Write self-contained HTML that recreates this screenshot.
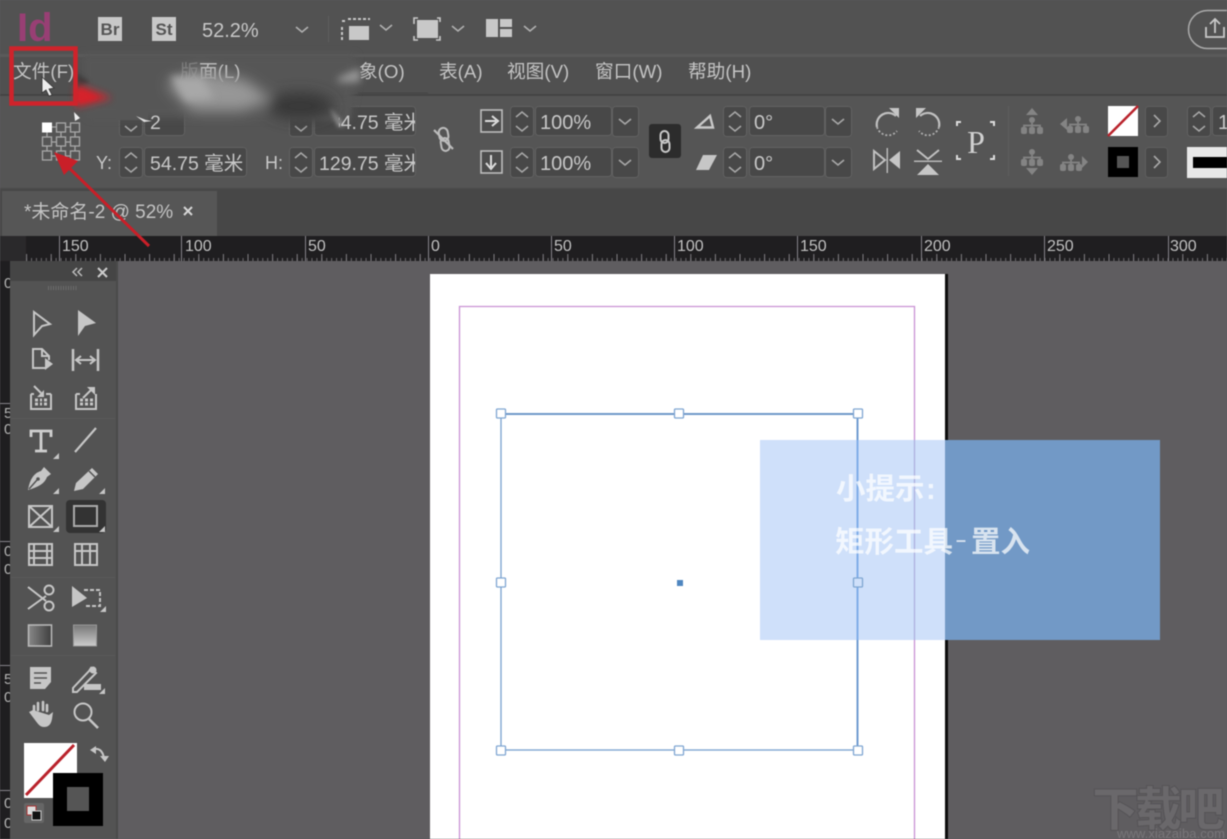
<!DOCTYPE html>
<html lang="zh"><head><meta charset="utf-8"><title>InDesign</title>
<style>
html,body{margin:0;padding:0;background:#5f5d60;width:1227px;height:839px;overflow:hidden}
svg{display:block;filter:blur(.5px)}
text{font-family:"Liberation Sans","Noto Sans CJK SC",sans-serif}
.m{font-size:18.7px;fill:#c4c4c4}
.f{font-size:20px;fill:#c8c8c8}
.c{font-size:19.5px;fill:#c8c8c8}
.r{font-size:16px;fill:#c2c2c2}
.i{fill:none;stroke:#c6c6c6;stroke-width:2}
.s{fill:#c6c6c6}
.d{fill:#8b8b8b}
.v{font-size:15px;fill:#b5b5b5}
</style></head><body>
<svg width="1227" height="839" viewBox="0 0 1227 839" xmlns="http://www.w3.org/2000/svg">
<defs>
<filter id="b8" x="-50%" y="-80%" width="200%" height="260%"><feGaussianBlur stdDeviation="7"/></filter>
<filter id="b4" x="-50%" y="-80%" width="200%" height="260%"><feGaussianBlur stdDeviation="4"/></filter>
<filter id="b2" x="-50%" y="-80%" width="200%" height="260%"><feGaussianBlur stdDeviation="2"/></filter>
<clipPath id="c1"><rect x="339" y="100" width="76" height="40"/></clipPath>
<clipPath id="c2"><rect x="300" y="145" width="115" height="35"/></clipPath>
<symbol id="sp" width="24" height="31" viewBox="0 0 24 31"><rect x=".5" y=".5" width="23" height="30" rx="3" fill="#484848" stroke="#616161"/><path d="M6 11l6-5 6 5M6 20l6 5 6-5" fill="none" stroke="#a8a8a8" stroke-width="1.5"/></symbol>
<symbol id="dd" width="27" height="31" viewBox="0 0 27 31"><rect x=".5" y=".5" width="26" height="30" rx="3" fill="#484848" stroke="#616161"/><path d="M7 13l6 5 6-5" fill="none" stroke="#a8a8a8" stroke-width="1.6"/></symbol>
<symbol id="ar" width="23" height="31" viewBox="0 0 23 31"><rect x=".5" y=".5" width="22" height="30" rx="3" fill="#484848" stroke="#5e5e5e"/><path d="M9 9l6 6-6 6" fill="none" stroke="#a8a8a8" stroke-width="1.6"/></symbol>
<symbol id="tr" width="22" height="17" viewBox="0 0 22 17"><circle cx="11" cy="3" r="3" fill="#848484"/><path d="M11 6v5M3 11V8.500h16V11" fill="none" stroke="#848484" stroke-width="1.800"/><rect x="0" y="10" width="6" height="7" rx="2" fill="#848484"/><rect x="8" y="10" width="6" height="7" rx="2" fill="#848484"/><rect x="16" y="10" width="6" height="7" rx="2" fill="#848484"/></symbol>
<pattern id="t1" width="4.92" height="25" patternUnits="userSpaceOnUse" x="1.500" y="236"><rect x="0" y="22" width="1" height="3" fill="#6c6a6e"/></pattern>
<pattern id="t2" width="24.6" height="25" patternUnits="userSpaceOnUse" x="1.500" y="236"><rect x="0" y="18" width="1" height="7" fill="#807e82"/></pattern>
<linearGradient id="g1" x1="0" x2="1"><stop offset="0" stop-color="#888"/><stop offset="1" stop-color="#3e3e3e"/></linearGradient>
<linearGradient id="g2" x1="0" x2="0" y1="0" y2="1"><stop offset="0" stop-color="#777"/><stop offset="1" stop-color="#ccc"/></linearGradient>
</defs>

<!-- backgrounds -->
<rect width="1227" height="839" fill="#5f5d60"/>
<rect width="1227" height="54" fill="#525252"/>
<rect y="54" width="1227" height="3" fill="#5a5a5a"/>
<rect y="57" width="1227" height="37" fill="#505050"/>
<rect y="94" width="1227" height="2" fill="#444"/>
<rect y="96" width="1227" height="93" fill="#555"/>
<rect y="189" width="1227" height="47" fill="#474747"/>
<rect x="2" y="191" width="215" height="45" fill="#565656"/>
<rect y="188" width="1227" height="1.500" fill="#4a4a4a"/>

<!-- top bar -->
<text x="17" y="41" font-size="40" font-weight="700" fill="#983f74">Id</text>
<rect x="98" y="17" width="24" height="24" fill="#c8c8c8"/><text x="110" y="35" font-size="17" font-weight="700" fill="#555" text-anchor="middle">Br</text>
<rect x="152" y="17" width="24" height="24" fill="#c8c8c8"/><text x="164" y="35" font-size="17" font-weight="700" fill="#555" text-anchor="middle">St</text>
<text x="202" y="37" class="f">52.2%</text>
<path d="M296 27l6 5 6-5M380 25l6 5 6-5M452 26l6 5 6-5M524 26l6 5 6-5" fill="none" stroke="#b0b0b0" stroke-width="1.600"/>
<rect x="328" y="16" width="1" height="26" fill="#5e5e5e"/>
<rect x="349" y="26" width="20" height="14" fill="#c8c8c8"/>
<path d="M342 27v14M348 19h22M342 21h4" fill="none" stroke="#c8c8c8" stroke-width="2" stroke-dasharray="3 2"/>
<rect x="417" y="20" width="21" height="18" fill="#c8c8c8"/>
<path d="M414 24v-6h4M437 18h3v4M440 36v4h-4M418 40h-4v-4" fill="none" stroke="#c8c8c8" stroke-width="1.600"/>
<rect x="486" y="19" width="12" height="18" fill="#c8c8c8"/><rect x="500" y="19" width="12" height="8" fill="#c8c8c8"/><rect x="500" y="29" width="12" height="8" fill="#c8c8c8"/>
<rect x="1188.500" y="10.500" width="60" height="38" rx="19" fill="none" stroke="#aaa" stroke-width="1.500"/>
<path d="M1206 27v10h18V27M1215 33V20M1210 24l5-5 5 5" fill="none" stroke="#c8c8c8" stroke-width="1.800"/>

<!-- menu -->
<text x="13" y="78" class="m">文件(F)</text>
<text x="439" y="78" class="m">表(A)</text>
<text x="507" y="78" class="m">视图(V)</text>
<text x="595" y="78" class="m">窗口(W)</text>
<text x="688" y="78" class="m">帮助(H)</text>
<path d="M358 93h70" stroke="#444" stroke-width="1"/>

<!-- control panel left -->
<g fill="none" stroke="#a8a8a8" stroke-width="1.300">
<path d="M52 127h4M65 127h5M47 132v5M61 132v5M75 132v5M52 142h4M65 142h5M47 146v5M61 146v5M75 146v5M52 156h4M65 156h5"/>
<rect x="56.500" y="123" width="9" height="9"/><rect x="70.500" y="123" width="9" height="9"/>
<rect x="42.500" y="137" width="9" height="9"/><rect x="56.500" y="137" width="9" height="9"/><rect x="70.500" y="137" width="9" height="9"/>
<rect x="42.500" y="151" width="9" height="9"/><rect x="56.500" y="151" width="9" height="9"/><rect x="70.500" y="151" width="9" height="9"/>
</g>
<rect x="42" y="122.500" width="10" height="10" fill="#fff"/>
<text x="96" y="169" class="f" style="font-size:18px">Y:</text>
<use href="#sp" x="119" y="147"/><rect x="144.500" y="147.500" width="102" height="29" rx="3" fill="#484848" stroke="#616161"/>
<text x="150" y="170" class="c">54.75 毫米</text>
<text x="265" y="169" class="f" style="font-size:18px">H:</text>
<use href="#sp" x="289" y="147"/><rect x="314.500" y="147.500" width="101" height="29" rx="3" fill="#484848" stroke="#616161"/>
<text x="319" y="170" class="c" clip-path="url(#c2)">129.75 毫米</text>
<use href="#sp" x="289" y="106"/><rect x="314.500" y="106.500" width="101" height="29" rx="3" fill="#484848" stroke="#616161"/>
<use href="#sp" x="119" y="106"/><rect x="144.500" y="106.500" width="40" height="29" rx="3" fill="#484848" stroke="#616161"/>
<!-- smudges -->
<path d="M82 54H356V84L350 118H300L290 118H190L120 118H88L82 90Z" fill="#565656" filter="url(#b4)"/>
<rect x="290" y="100" width="60" height="20" fill="#565656" filter="url(#b2)"/>
<rect x="116" y="104" width="32" height="16" fill="#565656"/>
<text x="150" y="129" class="c">2</text>
<text x="180" y="78" class="m" fill-opacity=".35">版</text>
<text x="199" y="78" class="m">面(L)</text>
<text x="359" y="78" class="m">象(O)</text>
<g filter="url(#b8)">
<path d="M166 84l32-14 48 10 26 20-30 11h-50z" fill="#979797"/>
<ellipse cx="300" cy="106" rx="34" ry="14" fill="#383838"/>
</g>
<path d="M170 76l32 2 12 20-28 3z" fill="#a8a8a8" filter="url(#b4)"/>
<path d="M338 78l22-10v14h-22z" fill="#9a9a9a" filter="url(#b4)"/>
<path d="M76 72l14 10-14 6z" fill="#3e3e3e" filter="url(#b2)"/>
<path d="M76 84l36 14-36 9z" fill="#d5202a" filter="url(#b4)"/>
<path d="M76 88l22 10-22 6z" fill="#d5202a" filter="url(#b2)"/>
<path d="M74 112l6 6-5 3z" fill="#eee"/>
<path d="M136 116l10 4 6 1-8 1z" fill="#ddd"/>
<path d="M330 108l16 18-8 1z" fill="#8e8e8e" filter="url(#b2)"/>
<text x="319" y="129" class="c" clip-path="url(#c1)">134.75 毫米</text>

<!-- unlink -->
<path d="M434 130l19 19" stroke="#bcbcbc" stroke-width="2.200"/>
<g fill="none" stroke="#bcbcbc" stroke-width="2"><rect x="439" y="128" width="9" height="13" rx="4.500" transform="rotate(-10 443 134)"/><rect x="441" y="138" width="8" height="13" rx="4" transform="rotate(-10 445 144)"/></g>

<!-- scale -->
<g fill="#4d4d4d" stroke="#bdbdbd" stroke-width="1.600">
<rect x="481" y="110" width="21" height="22"/><rect x="481" y="151" width="21" height="22"/>
</g>
<path d="M485 121h11M492 116l6 5-6 5" fill="none" stroke="#ddd" stroke-width="2"/>
<path d="M491 155v12M486 163l5 6 5-6" fill="none" stroke="#ddd" stroke-width="2"/>
<use href="#sp" x="510" y="106"/><rect x="535.500" y="106.500" width="76" height="29" rx="3" fill="#484848" stroke="#616161"/><use href="#dd" x="612" y="106"/>
<text x="540" y="129" class="f">100%</text>
<use href="#sp" x="510" y="147"/><rect x="535.500" y="147.500" width="76" height="29" rx="3" fill="#484848" stroke="#616161"/><use href="#dd" x="612" y="147"/>
<text x="540" y="170" class="f">100%</text>
<rect x="649" y="124" width="32" height="34" rx="3" fill="#2c2c2c"/>
<g fill="none" stroke="#c8c8c8" stroke-width="2"><rect x="660.500" y="131" width="8" height="12" rx="4"/><rect x="661.500" y="140" width="8" height="12" rx="4"/></g>

<!-- angle -->
<path d="M697 127.500L710 116l3 11.500z" fill="none" stroke="#c8c8c8" stroke-width="2.400"/>
<path d="M703 155h14l-8 15h-13z" class="s"/>
<use href="#sp" x="723" y="106"/><rect x="749.500" y="106.500" width="75" height="29" rx="3" fill="#484848" stroke="#616161"/><use href="#dd" x="825" y="106"/>
<text x="754" y="129" class="f">0°</text>
<use href="#sp" x="723" y="147"/><rect x="749.500" y="147.500" width="75" height="29" rx="3" fill="#484848" stroke="#616161"/><use href="#dd" x="825" y="147"/>
<text x="754" y="170" class="f">0°</text>

<!-- rotate/flip -->
<path d="M877 127a11.500 11.500 0 0 1 19-11" fill="none" stroke="#c0c0c0" stroke-width="2.200"/><path d="M877 127a11.500 11.500 0 0 0 20 4" fill="none" stroke="#b0b0b0" stroke-width="1.800" stroke-dasharray="2 2"/><path d="M889 108h10v10z" class="s"/>
<path d="M939 127a11.500 11.500 0 0 0-19-11" fill="none" stroke="#c0c0c0" stroke-width="2.200"/><path d="M939 127a11.500 11.500 0 0 1-20 4" fill="none" stroke="#b0b0b0" stroke-width="1.800" stroke-dasharray="2 2"/><path d="M926 108h-10v10z" class="s"/>
<path d="M874 151l11 9-11 9z" fill="none" stroke="#c0c0c0" stroke-width="2"/><path d="M900 151l-11 9 11 9z" class="s"/><rect x="886.500" y="148" width="1.500" height="25" fill="#b8b8b8"/>
<path d="M917 150l11 9 11-9" fill="none" stroke="#c0c0c0" stroke-width="2"/><path d="M917 175l11-11 11 11z" class="s"/><rect x="914" y="160.500" width="28" height="1.500" fill="#b8b8b8"/>
<text x="976" y="153" font-size="32" fill="#d0d0d0" text-anchor="middle" style="font-family:'Liberation Serif',serif">P</text>
<path d="M957 126v-4h4M990 122h4v4M957 155v4h4M994 155v4h-4" fill="none" stroke="#ddd" stroke-width="2"/>
<rect x="1008" y="106" width="1" height="70" fill="#5d5d5d"/>

<!-- org icons -->
<use href="#tr" x="1021" y="117"/><path d="M1026 115l6-7 6 7z" fill="#848484"/>
<use href="#tr" x="1021" y="149"/><path d="M1026 168l6 7 6-7z" fill="#848484"/>
<use href="#tr" x="1067" y="116"/><path d="M1067 118l-7 6 7 6z" fill="#848484"/>
<use href="#tr" x="1060" y="154"/><path d="M1082 156l6 6-6 6z" fill="#848484"/>

<!-- swatches -->
<rect x="1108" y="106" width="30" height="30" fill="#fff"/>
<path d="M1108 136l30-30" stroke="#b9222b" stroke-width="2.500"/>
<use href="#ar" x="1145" y="106"/>
<rect x="1108" y="147" width="30" height="30" fill="#000"/><rect x="1117" y="156" width="12" height="12" fill="#555"/>
<use href="#ar" x="1145" y="147"/>
<use href="#sp" x="1187" y="106"/><rect x="1212.500" y="106.500" width="20" height="29" rx="3" fill="#484848" stroke="#616161"/>
<text x="1218" y="129" class="f">1</text>
<rect x="1187" y="147" width="40" height="31" fill="#e8e8e8"/><rect x="1193" y="157" width="34" height="11" fill="#000"/>

<!-- tab -->
<text x="24" y="218" font-size="19" fill="#c4c4c4">*未命名-2 @ 52%</text>
<path d="M184 207l8 8M192 207l-8 8" stroke="#d5d5d5" stroke-width="2"/>

<!-- h ruler -->
<rect y="236" width="1227" height="25" fill="#1f1e20"/>
<rect y="236" width="1227" height="25" fill="url(#t1)"/>
<rect y="236" width="1227" height="25" fill="url(#t2)"/>
<g fill="#86848a">
<rect x="59" y="236" width="1" height="25"/><rect x="181" y="236" width="1" height="25"/><rect x="305" y="236" width="1" height="25"/><rect x="428" y="236" width="1" height="25"/><rect x="551" y="236" width="1" height="25"/><rect x="674" y="236" width="1" height="25"/><rect x="797" y="236" width="1" height="25"/><rect x="921" y="236" width="1" height="25"/><rect x="1044" y="236" width="1" height="25"/><rect x="1168" y="236" width="1" height="25"/>
</g>
<text x="62" y="251" class="r">150</text><text x="185" y="251" class="r">100</text><text x="308" y="251" class="r">50</text><text x="431" y="251" class="r">0</text><text x="554" y="251" class="r">50</text><text x="677" y="251" class="r">100</text><text x="800" y="251" class="r">150</text><text x="924" y="251" class="r">200</text><text x="1047" y="251" class="r">250</text><text x="1170" y="251" class="r">300</text>
<rect y="236" width="26" height="25" fill="#2a292b"/>

<!-- v ruler -->
<rect y="261" width="10" height="578" fill="#1f1e20"/>
<rect x="0" y="403" width="10" height="1" fill="#86848a"/><rect x="0" y="665" width="10" height="1" fill="#86848a"/><rect x="0" y="790" width="10" height="1" fill="#86848a"/><rect x="0" y="541" width="10" height="1" fill="#86848a"/>
<text x="4" y="288" class="v">0</text><text x="4" y="418" class="v">5</text><text x="4" y="434" class="v">0</text><text x="4" y="556" class="v">0</text><text x="4" y="574" class="v">0</text><text x="4" y="684" class="v">5</text><text x="4" y="702" class="v">0</text><text x="4" y="808" class="v">0</text><text x="4" y="828" class="v">0</text>

<!-- tool panel -->
<rect x="10" y="261" width="106" height="578" fill="#535353"/>
<rect x="10" y="261" width="106" height="20" fill="#454545"/>
<rect x="116" y="261" width="2" height="578" fill="#4a4a4a"/>
<path d="M77 268l-4 4 4 4M82 268l-4 4 4 4" fill="none" stroke="#bbb" stroke-width="1.500"/>
<path d="M98 268l9 9M107 268l-9 9" stroke="#ccc" stroke-width="2"/>
<path d="M48 288h29" stroke="#6c6c6c" stroke-width="4" stroke-dasharray="1 1.500"/>
<rect x="11" y="418" width="104" height="1" fill="#5a5a5a"/><rect x="11" y="577" width="104" height="1" fill="#5a5a5a"/><rect x="11" y="655" width="104" height="1" fill="#5a5a5a"/>
<!-- row 1 -->
<path d="M34 312l16 12-8 2-8 9z" class="i"/>
<path d="M78 310l18 13-11 3-7 10z" class="s"/>
<!-- row 2 -->
<path d="M45 368H33v-19h9l7 7v4M42 349v7h7" class="i"/><path d="M45 358l8 6-8 6z" class="s"/>
<path d="M73 349v22M98 349v22" stroke="#c6c6c6" stroke-width="2.500"/><path d="M77 360h17M81 356l-5 4 5 4M90 356l5 4-5 4" class="i"/>
<!-- row 3 -->
<path d="M31 394v15h20v-15M46 394h5M31 394h3" class="i"/><path d="M34 386l7 7" class="i"/><path d="M44 390v7h-7z" class="s"/>
<path d="M35 400h3M40 400h2M44 400h3M35 404h3M40 404h2M44 404h3" stroke="#c6c6c6" stroke-width="3"/>
<path d="M76 394v15h20v-15M76 394h4" class="i"/><path d="M83 398l8-8" class="i"/><path d="M87 387h8v8z" class="s"/>
<path d="M80 400h3M85 400h3M90 400h3M80 404h3M85 404h3M90 404h3" stroke="#c6c6c6" stroke-width="3"/>
<!-- row 4 -->
<path d="M31 437v-6h20v6M41 431v20M35 451h12" fill="none" stroke="#cfcfcf" stroke-width="2.800"/>
<path d="M75 452l21-24" stroke="#c6c6c6" stroke-width="2.200"/>
<path d="M53 459h6v-6z" class="s"/>
<!-- row 5 -->
<path d="M44 467l7 7-4 3c-2 6-8 10-19 13 2-11 6-17 13-19z" class="s"/><path d="M29 489l8-9" stroke="#535353" stroke-width="1.500"/><circle cx="38" cy="479" r="1.800" fill="#535353"/>
<path d="M92 468l6 6-15 15-9 2 2-8z" class="s"/><path d="M89 471l6 6" stroke="#535353" stroke-width="1.500"/>
<path d="M53 494h6v-6zM99 494h6v-6z" class="s"/>
<!-- row 6 active -->
<rect x="66" y="500" width="40" height="33" rx="4" fill="#333"/>
<rect x="74" y="506" width="23" height="20" fill="none" stroke="#aaa" stroke-width="2"/>
<path d="M99 532h6v-6z" class="s"/>
<rect x="29" y="506" width="23" height="21" class="i"/><path d="M29 506l23 21M52 506l-23 21" class="i"/>
<path d="M53 532h6v-6z" class="s"/>
<!-- row 7 -->
<rect x="29" y="544" width="23" height="21" class="i"/><path d="M29 551h23M29 558h23" class="i"/><path d="M34 544v21M47 544v21" class="i"/>
<rect x="75" y="544" width="22" height="21" class="i"/><path d="M75 551h22M82 544v21M90 544v21" class="i"/>
<!-- row 8 scissors -->
<circle cx="49" cy="590" r="4.500" class="i"/><circle cx="49" cy="606" r="4.500" class="i"/><path d="M28 587l18 14M28 609l18-13" class="i" stroke-width="2.400"/>
<path d="M72 586l15 12-15 9z" class="s"/><path d="M84 590h16v16H86" fill="none" stroke="#c6c6c6" stroke-width="2" stroke-dasharray="4 2"/>
<path d="M100 612h6v-6z" class="s"/>
<!-- row 9 -->
<rect x="28.500" y="625" width="23" height="21" fill="url(#g1)" stroke="#bbb" stroke-width="1.500"/>
<rect x="73.500" y="625" width="23" height="21" fill="url(#g2)" stroke="#999"/>
<!-- row 10 -->
<path d="M30 667h21v15l-6 7H30z" class="s"/><path d="M34 673h13M34 678h13M34 683h7" stroke="#535353" stroke-width="1.500"/>
<path d="M91 668l5 5-3 3-16 16h-4v-4l16-17z" class="i"/><circle cx="93" cy="670" r="3.500" class="s"/><rect x="84" y="684" width="17" height="6" class="s"/><path d="M99 694h6v-6z" class="s"/>
<!-- row 11 -->
<path d="M34 712v-6M38 710v-7M43 710v-8M47 711v-6" stroke="#c6c6c6" stroke-width="2.600" stroke-linecap="round"/><path d="M29 712l6 8c3 4 5 7 9 7 5 0 7-3 8-8l1-7-4 3-16-5z" class="s"/>
<circle cx="83" cy="712" r="8.500" class="i"/><path d="M89 719l9 9" stroke="#c6c6c6" stroke-width="2.600"/>
<!-- colours -->
<rect x="24" y="743" width="53" height="55" fill="#fff"/>
<path d="M26 795l48-50" stroke="#b9222b" stroke-width="3"/>
<rect x="53" y="773" width="50" height="53" fill="#000"/><rect x="67" y="787" width="22" height="24" fill="#555"/>
<path d="M92 750c6-3 11 0 12 9" class="i"/><path d="M90 750l6-4v8zM100 756h9l-4 6z" class="s"/>
<rect x="24" y="803" width="20" height="20" rx="2" fill="#666"/>
<rect x="27" y="806" width="9" height="9" fill="#ddd" stroke="#a33" stroke-width="1"/><rect x="32" y="811" width="9" height="9" fill="#111" stroke="#ccc" stroke-width="1"/>

<!-- page -->
<rect x="945" y="274" width="3" height="565" fill="#0d0d0d"/>
<rect x="430" y="274" width="515" height="565" fill="#fff"/>
<path d="M914.500 839V306.500H459.500V839" fill="none" stroke="#c992d4" stroke-width="1.300"/>
<rect x="501" y="414" width="356.500" height="336" fill="none" stroke="#7fa6d2" stroke-width="1.400"/>
<path d="M501 414h356" stroke="#6f98c9" stroke-width="2"/><path d="M857.500 414v336" stroke="#6f9bd0" stroke-width="2"/>
<rect x="677" y="580" width="6" height="6" fill="#4f86c0"/>

<!-- tip -->
<rect x="760" y="440" width="185" height="200" fill="#cfe0fa"/>
<rect x="945" y="440" width="215" height="200" fill="#7299c6"/>
<path d="M857.500 440v200" stroke="#7fade8" stroke-width="2"/>
<path d="M914.500 440v200" stroke="#adb0df" stroke-width="1.300"/>
<g fill="#fff" stroke="#7fa6d2" stroke-width="1.300">
<rect x="496.500" y="409" width="9" height="9" rx="1"/><rect x="674.500" y="409" width="9" height="9" rx="1"/><rect x="853.500" y="409" width="9" height="9" rx="1"/>
<rect x="496.500" y="578" width="9" height="9" rx="1"/>
<rect x="496.500" y="746" width="9" height="9" rx="1"/><rect x="674.500" y="746" width="9" height="9" rx="1"/><rect x="853.500" y="746" width="9" height="9" rx="1"/>
</g>
<rect x="853.500" y="578" width="9" height="9" rx="1" fill="#cfe0fa" stroke="#7fa6d2" stroke-width="1.300"/>
<g fill="#fff" fill-opacity=".72" font-size="29.500" font-weight="700">
<text x="836" y="499" font-size="29.500">小提示</text><text x="926" y="499" font-size="29.500" font-weight="700" style="font-family:'Liberation Sans',sans-serif">:</text>
<text x="835" y="552" font-size="29.500">矩形工具</text><text x="956" y="546" font-size="18" style="font-family:'Liberation Sans',sans-serif">–</text><text x="971" y="552" font-size="29.500">置入</text>
</g>

<!-- watermark -->
<text x="1092" y="826" font-size="47" font-weight="900" fill="#6a686b" stroke="#555356" stroke-width="1" textLength="133" style="font-family:'Noto Sans CJK SC',sans-serif">下载吧</text>
<text x="1117" y="838" font-size="13" fill="#787679" textLength="108">www.xiazaiba.com</text>

<!-- annotations -->
<rect x="11.500" y="48.500" width="64" height="55" fill="none" stroke="#cf232b" stroke-width="4.500"/>
<path d="M149 246L63 162" stroke="#c91f28" stroke-width="3"/>
<path d="M54 152l24 9-14 14z" fill="#c91f28"/>
<path d="M42 77v16l4-3 3 6 3-1-3-6 5-1z" fill="#eee" stroke="#333" stroke-width=".8"/>
</svg>
</body></html>
